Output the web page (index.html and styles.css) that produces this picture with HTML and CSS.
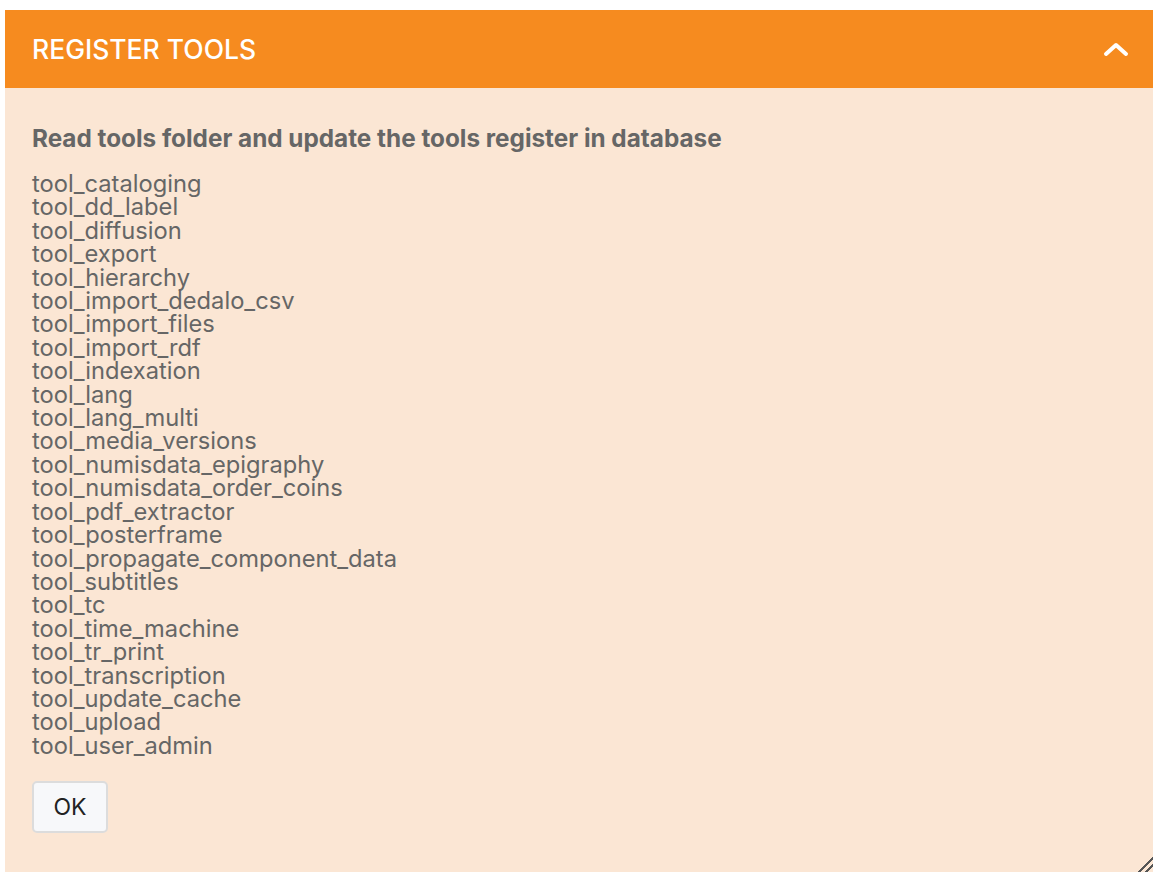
FILE: index.html
```html
<!DOCTYPE html>
<html lang="en">
<head>
    <meta charset="UTF-8">
    <meta name="viewport" content="width=device-width, initial-scale=1.0">
    <title>Register tools</title>
    <link rel="stylesheet" href="styles.css">
</head>
<body>
    <!-- Register tools panel -->
    <div class="panel">
        <div class="panel_head">
            <h2>REGISTER TOOLS</h2>
            <svg class="toggle" width="26" height="16" viewBox="0 0 26 16">
                <path d="M3 13 L13 4 L23 13" fill="none" stroke="#fff" stroke-width="4" stroke-linecap="round" stroke-linejoin="round"/>
            </svg>
        </div>
        <div class="panel_body">
            <p class="info">Read tools folder and update the tools register in database</p>
            <ul class="tool_list">
                <li>tool_cataloging</li>
                <li>tool_dd_label</li>
                <li>tool_diffusion</li>
                <li>tool_export</li>
                <li>tool_hierarchy</li>
                <li>tool_import_dedalo_csv</li>
                <li>tool_import_files</li>
                <li>tool_import_rdf</li>
                <li>tool_indexation</li>
                <li>tool_lang</li>
                <li>tool_lang_multi</li>
                <li>tool_media_versions</li>
                <li>tool_numisdata_epigraphy</li>
                <li>tool_numisdata_order_coins</li>
                <li>tool_pdf_extractor</li>
                <li>tool_posterframe</li>
                <li>tool_propagate_component_data</li>
                <li>tool_subtitles</li>
                <li>tool_tc</li>
                <li>tool_time_machine</li>
                <li>tool_tr_print</li>
                <li>tool_transcription</li>
                <li>tool_update_cache</li>
                <li>tool_upload</li>
                <li>tool_user_admin</li>
            </ul>
            <button class="ok_btn">OK</button>
        </div>
    </div>
</body>
</html>
```
FILE: styles.css
```css
*{
    margin: 0;
    padding: 0;
    box-sizing: border-box;
}
body{
    background-color: #fff;
    font-family: Inter, "Noto Sans", sans-serif;
}
.panel{
    margin: 10px 0 0 5px;
    width: 1148px;
    height: 862px;
    background-color: #fbe6d4;
    resize: both;
    overflow: auto;
}
.panel::-webkit-resizer{
    background: linear-gradient(135deg, transparent 50%, #555 50%, #555 60%, transparent 60%, transparent 73%, #555 73%, #555 83%, transparent 83%);
}
.panel_head{
    display: flex;
    justify-content: space-between;
    align-items: center;
    height: 78px;
    padding: 0 24px 0 27px;
    background-color: #f68b1f;
    color: white;
}
.panel_head h2{
    font-size: 26.5px;
    font-weight: 500;
    line-height: 30px;
}
.panel_body{
    padding: 36px 27px 20px;
    color: #666;
}
.info{
    font-size: 24.3px;
    font-weight: 700;
    line-height: 29px;
    margin-bottom: 19px;
}
.tool_list{
    list-style: none;
    font-size: 23.7px;
    line-height: 23.4px;
}
.ok_btn{
    margin-top: 24px;
    width: 76px;
    height: 52px;
    font-family: inherit;
    font-size: 23px;
    color: #222;
    background-color: #f7f8fa;
    border: 2px solid #dcdcdc;
    border-radius: 5px;
}
```
